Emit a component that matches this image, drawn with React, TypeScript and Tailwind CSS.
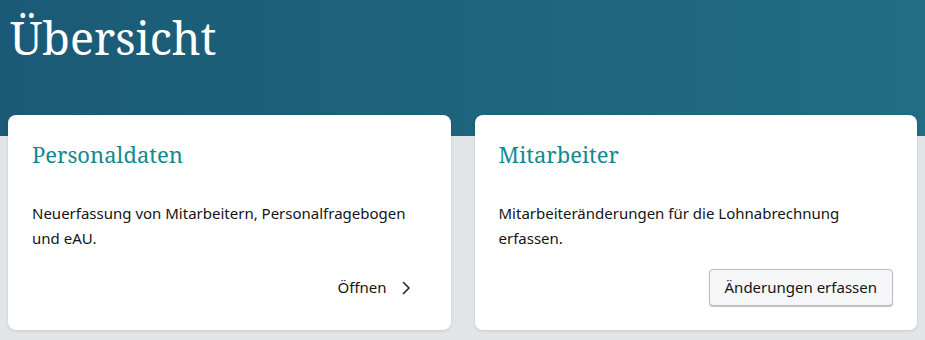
import React from "react";

const serif = { fontFamily: '"Noto Serif", "DejaVu Serif", "Liberation Serif", serif' };

function Chevron() {
  return (
    <svg width="10" height="16" viewBox="0 0 10 16" fill="none" className="ml-[14px]">
      <path d="M2.5 2.5 L8 8 L2.5 13.5" stroke="#222" strokeWidth="1.6" strokeLinecap="round" strokeLinejoin="round" />
    </svg>
  );
}

export default function App() {
  return (
    <div className="w-[925px] h-[340px] bg-[#e2e5e8] overflow-hidden" style={{ fontFamily: '"Noto Sans", "Open Sans", sans-serif' }}>
      <div className="h-[136px] bg-gradient-to-r from-[#1b5a76] to-[#216d83] px-[10px] pt-[8px]">
        <h1 className="text-[45px] leading-[60px] text-white font-normal" style={serif}>Übersicht</h1>
      </div>
      <div className="-mt-[21px] grid grid-cols-2 gap-[24px] px-[8px]">
        <div className="h-[215px] bg-white rounded-[8px] shadow-[0_1px_3px_rgba(0,0,0,0.12)] flex flex-col px-[24px] pt-[23px] pb-[24px]">
          <h2 className="text-[22px] leading-[32px] text-[#148990] font-normal" style={serif}>Personaldaten</h2>
          <p className="mt-[31px] text-[15px] leading-[25px] text-[#141414]">Neuerfassung von Mitarbeitern, Personalfragebogen und eAU.</p>
          <div className="mt-auto flex justify-end">
            <button className="h-[37px] flex items-center pr-[16px] text-[15px] text-[#141414]">
              Öffnen
              <Chevron />
            </button>
          </div>
        </div>
        <div className="h-[215px] bg-white rounded-[8px] shadow-[0_1px_3px_rgba(0,0,0,0.12)] flex flex-col px-[24px] pt-[23px] pb-[24px]">
          <h2 className="text-[22px] leading-[32px] text-[#148990] font-normal" style={serif}>Mitarbeiter</h2>
          <p className="mt-[31px] text-[15px] leading-[25px] text-[#141414]">Mitarbeiteränderungen für die Lohnabrechnung erfassen.</p>
          <div className="mt-auto flex justify-end">
            <button className="h-[37px] px-[15px] flex items-center text-[15px] text-[#141414] bg-[#f5f6f8] border border-[#b9bdc3] rounded-[4px] shadow-[0_1px_1px_rgba(0,0,0,0.25)]">
              Änderungen erfassen
            </button>
          </div>
        </div>
      </div>
    </div>
  );
}
